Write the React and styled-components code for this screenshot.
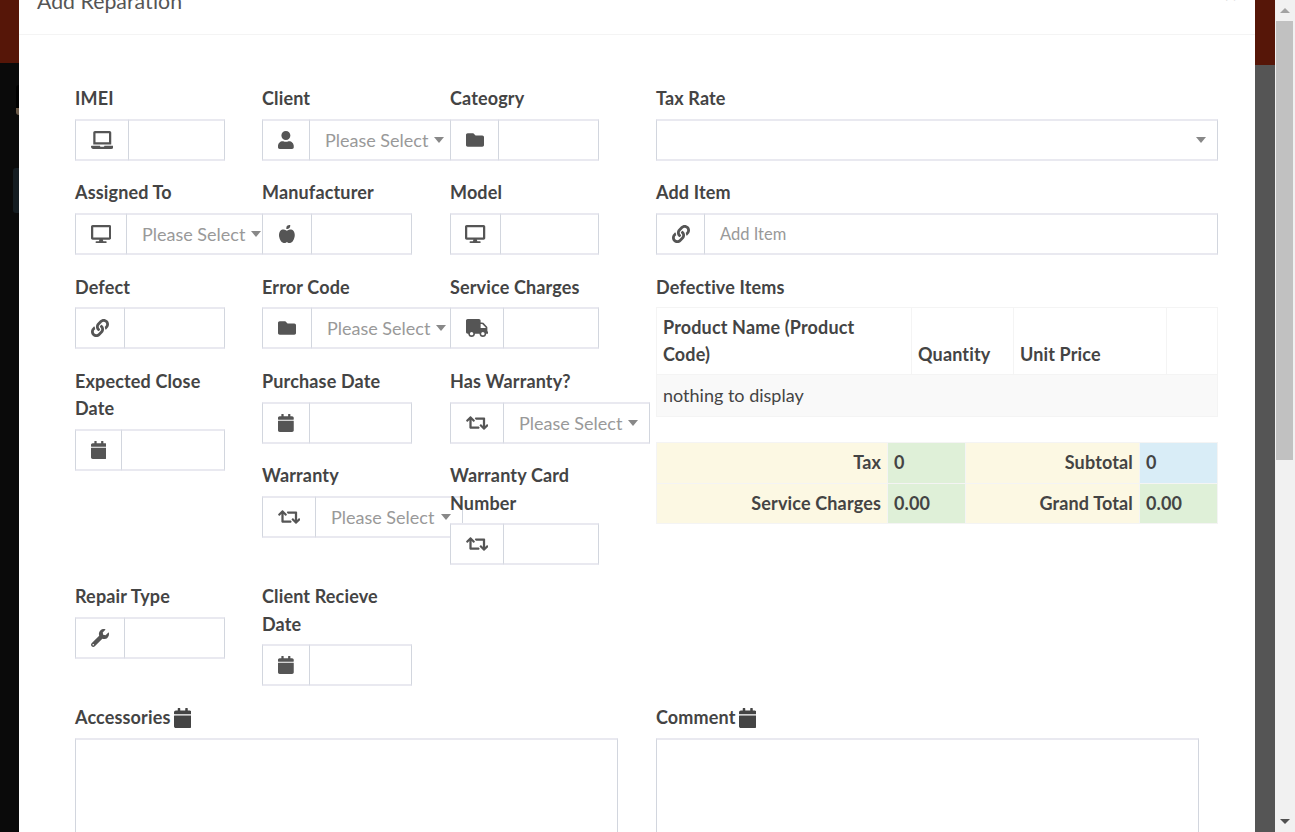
import React from "react";
import styled, { createGlobalStyle } from "styled-components";
import {
  FaLaptop, FaUser, FaFolder, FaDesktop, FaAppleAlt, FaLink, FaTruck,
  FaCalendar, FaRetweet, FaWrench,
} from "react-icons/fa";

const Global = createGlobalStyle`
  html, body { margin: 0; padding: 0; height: 100%; overflow: hidden; }
  body { font-family: "Lato", "Liberation Sans", sans-serif; color: #444; }
  * { box-sizing: border-box; }
`;

const Page = styled.div`
  display: flex;
  height: 832px;
  overflow: hidden;
`;

const Gutter = styled.div`
  flex: none;
  width: ${({ $w }) => $w}px;
  display: flex;
  flex-direction: column;
  background: ${({ $bg }) => $bg};
`;

const Band = styled.div`
  flex: none;
  height: ${({ $h }) => $h}px;
  background: #561608;
`;

const Avatar = styled.div`
  width: 3px;
  height: 30px;
  margin: 22px 0 0 16px;
  border-radius: 3px 0 0 3px;
  background: linear-gradient(#000 77%, #6b5a48 77%);
`;

const SideItem = styled.div`
  width: 6px;
  height: 45px;
  margin: 53px 0 0 13px;
  border-radius: 3px 0 0 3px;
  background: #151d22;
`;

const Modal = styled.div`
  flex: none;
  width: 1236px;
  background: #fff;
  overflow: hidden;
`;

const Header = styled.div`
  height: 35px;
  padding: 0 18px;
  display: flex;
  align-items: flex-end;
  justify-content: space-between;
  border-bottom: 1px solid #f4f4f4;
  overflow: hidden;
`;

const Title = styled.div`
  flex: none;
  font-size: 21.3px;
  line-height: 27px;
  margin-bottom: 19px;
  color: #555;
`;

const Close = styled.div`
  flex: none;
  font-size: 22px;
  line-height: 27px;
  margin: 0 0 26px 0;
  color: #c8c8c8;
`;

const Body = styled.div`
  padding: 49.8px 37px 0 56px;
`;

const Columns = styled.div`
  display: flex;
  height: 619.2px;
`;

const LeftGrid = styled.div`
  flex: none;
  width: 581px;
  display: grid;
  grid-template-columns: 187px 188px 206px;
  grid-template-rows: repeat(4, 94.4px) 121px 121px;
  align-items: start;
`;

const Field = styled.div`
  position: relative;
  min-width: 0;
  grid-column: ${({ $c }) => $c};
  grid-row: ${({ $r }) => $r} / span ${({ $span }) => $span || 1};
  z-index: ${({ $c }) => $c};
`;

const Label = styled.label`
  display: block;
  width: ${({ $w }) => $w || "100%"};
  font-size: 18px;
  line-height: 27.2px;
  letter-spacing: 0.15px;
  font-weight: 700;
  color: #444;
  margin-bottom: 6.6px;
`;

const Group = styled.div`
  display: flex;
  height: 42px;
  width: ${({ $w }) => $w || 150}px;
  background: #fff;
`;

const Addon = styled.div`
  flex: none;
  width: ${({ $w }) => $w}px;
  display: flex;
  align-items: center;
  justify-content: center;
  color: #555;
  background: #fff;
  border: 1px solid #d2d6de;
  border-top: 2px solid #e9e9f0;
  border-bottom: 2px solid #e9e9f0;
  svg {
    width: ${({ $iw }) => $iw || 18}px;
    height: 18px;
  }
`;

const Input = styled.div`
  flex: 1;
  display: flex;
  align-items: center;
  min-width: 0;
  font-size: ${({ $size }) => $size || 18}px;
  padding-left: 15px;
  color: #999;
  background: #fff;
  border: 1px solid #d2d6de;
  border-left: 0;
  border-top: 2px solid #e9e9f0;
  border-bottom: 2px solid #e9e9f0;
`;

const Select = styled(Input)`
  flex: none;
  width: ${({ $w }) => $w || 146}px;
  justify-content: space-between;
  padding-right: 11px;
  white-space: nowrap;
`;

const TaxSelect = styled(Select)`
  border-left: 1px solid #d2d6de;
`;

const Caret = styled.span`
  flex: none;
  width: 0;
  height: 0;
  border-left: 5px solid transparent;
  border-right: 5px solid transparent;
  border-top: 6px solid #888;
`;

const Right = styled.div`
  flex: none;
  width: 562px;
`;

const RightField = styled.div`
  margin-bottom: 18.6px;
`;

const WideGroup = styled(Group)`
  width: 100%;
`;

const Grid = styled.table`
  width: 561px;
  border-collapse: collapse;
  table-layout: fixed;
  margin-bottom: 25px;
  font-size: 18px;
  line-height: 27.2px;
  color: #444;
`;

const Th = styled.th`
  width: ${({ $w }) => $w}px;
  padding: 5.5px 6px 6px;
  text-align: left;
  vertical-align: bottom;
  font-weight: 700;
  letter-spacing: 0.15px;
  border: 1px solid #f4f4f4;
`;

const Td = styled.td`
  padding: 6.5px 6px 7px;
  background: #f9f9f9;
  border: 1px solid #f4f4f4;
`;

const TotalCell = styled.td`
  width: ${({ $w }) => $w}px;
  padding: 6px 6px 6.5px;
  font-weight: 700;
  letter-spacing: 0.15px;
  text-align: ${({ $right }) => ($right ? "right" : "left")};
  background: ${({ $bg }) => $bg};
  border: 1px solid #f4f4f4;
`;

const Notes = styled.div`
  display: grid;
  grid-template-columns: 581px 543px;
`;

const NoteLabel = styled(Label)`
  display: flex;
  align-items: center;
  gap: 3px;
  svg {
    width: 17.5px;
    height: 20px;
    color: #444;
  }
`;

const Note = styled.div`
  width: 543px;
  height: 150px;
  border: 1px solid #d2d6de;
  border-top: 2px solid #e9e9f0;
`;

const Scrollbar = styled.div`
  flex: none;
  width: 20px;
  height: 832px;
  display: flex;
  flex-direction: column;
  justify-content: space-between;
  background: #f1f1f1;
`;

const Thumb = styled.div`
  width: 17px;
  height: 439px;
  margin-left: 1px;
  background: #c1c1c1;
`;

const Arrow = styled.div`
  display: flex;
  align-items: center;
  justify-content: center;
  height: 21px;
  &::before {
    content: "";
    width: 0;
    height: 0;
    border-left: 5px solid transparent;
    border-right: 5px solid transparent;
    ${({ $up }) => ($up ? "border-bottom: 5px solid #a3a3a3;" : "border-top: 5px solid #505050;")}
  }
`;

// icon widths follow the glyph's own aspect ratio at 18px high
const WIDE = 22.5;
const SCREEN = 20.25;
const NARROW = 15.75;

const fields = [
  { c: 1, r: 1, label: "IMEI", Icon: FaLaptop, w: 54, iw: WIDE },
  { c: 2, r: 1, label: "Client", Icon: FaUser, w: 48, iw: NARROW, select: true },
  { c: 3, r: 1, label: "Cateogry", Icon: FaFolder, w: 49, gw: 149 },
  { c: 1, r: 2, label: "Assigned To", Icon: FaDesktop, w: 52, iw: SCREEN, select: true },
  { c: 2, r: 2, label: "Manufacturer", Icon: FaAppleAlt, w: 50, iw: NARROW },
  { c: 3, r: 2, label: "Model", Icon: FaDesktop, w: 51, iw: SCREEN, gw: 149 },
  { c: 1, r: 3, label: "Defect", Icon: FaLink, w: 50 },
  { c: 2, r: 3, label: "Error Code", Icon: FaFolder, w: 50, select: true },
  { c: 3, r: 3, label: "Service Charges", Icon: FaTruck, w: 54, iw: WIDE, gw: 149 },
  { c: 1, r: 4, span: 2, label: "Expected Close Date", Icon: FaCalendar, w: 47, iw: NARROW, lw: "140px" },
  { c: 2, r: 4, label: "Purchase Date", Icon: FaCalendar, w: 48, iw: NARROW },
  { c: 3, r: 4, label: "Has Warranty?", Icon: FaRetweet, w: 54, iw: WIDE, select: true },
  { c: 2, r: 5, label: "Warranty", Icon: FaRetweet, w: 54, iw: WIDE, select: true, sw: 147 },
  { c: 3, r: 5, label: "Warranty Card Number", Icon: FaRetweet, w: 54, iw: WIDE, gw: 149, lw: "150px" },
  { c: 1, r: 6, label: "Repair Type", Icon: FaWrench, w: 50 },
  { c: 2, r: 6, label: "Client Recieve Date", Icon: FaCalendar, w: 48, iw: NARROW, lw: "140px" },
];

function App() {
  return (
    <Page>
      <Global />
      <Gutter $w={19} $bg="#0a0a0a">
        <Band $h={63} />
        <Avatar />
        <SideItem />
      </Gutter>
      <Modal>
        <Header>
          <Title>Add Reparation</Title>
          <Close>×</Close>
        </Header>
        <Body>
          <Columns>
            <LeftGrid>
              {fields.map((f) => (
                <Field key={f.label} $c={f.c} $r={f.r} $span={f.span}>
                  <Label $w={f.lw}>{f.label}</Label>
                  <Group $w={f.select ? f.w + (f.sw || 146) : f.gw}>
                    <Addon $w={f.w} $iw={f.iw}><f.Icon /></Addon>
                    {f.select ? (
                      <Select $w={f.sw}>Please Select <Caret /></Select>
                    ) : (
                      <Input />
                    )}
                  </Group>
                </Field>
              ))}
            </LeftGrid>
            <Right>
              <RightField>
                <Label>Tax Rate</Label>
                <WideGroup>
                  <TaxSelect $w={562}>
                    <span />
                    <Caret />
                  </TaxSelect>
                </WideGroup>
              </RightField>
              <RightField>
                <Label>Add Item</Label>
                <WideGroup>
                  <Addon $w={49}><FaLink /></Addon>
                  <Input $size={16.5}>Add Item</Input>
                </WideGroup>
              </RightField>
              <Label>Defective Items</Label>
              <Grid>
                <thead>
                  <tr>
                    <Th $w={255}>Product Name (Product<br />Code)</Th>
                    <Th $w={102}>Quantity</Th>
                    <Th $w={153}>Unit Price</Th>
                    <Th $w={51} />
                  </tr>
                </thead>
                <tbody>
                  <tr>
                    <Td colSpan={4}>nothing to display</Td>
                  </tr>
                </tbody>
              </Grid>
              <Grid>
                <tbody>
                  <tr>
                    <TotalCell $w={231} $right $bg="#fcf8e3">Tax</TotalCell>
                    <TotalCell $w={78} $bg="#dff0d8">0</TotalCell>
                    <TotalCell $w={174} $right $bg="#fcf8e3">Subtotal</TotalCell>
                    <TotalCell $w={78} $bg="#d9edf7">0</TotalCell>
                  </tr>
                  <tr>
                    <TotalCell $right $bg="#fcf8e3">Service Charges</TotalCell>
                    <TotalCell $bg="#dff0d8">0.00</TotalCell>
                    <TotalCell $right $bg="#fcf8e3">Grand Total</TotalCell>
                    <TotalCell $bg="#dff0d8">0.00</TotalCell>
                  </tr>
                </tbody>
              </Grid>
            </Right>
          </Columns>
          <Notes>
            <div>
              <NoteLabel>Accessories <FaCalendar /></NoteLabel>
              <Note />
            </div>
            <div>
              <NoteLabel>Comment <FaCalendar /></NoteLabel>
              <Note />
            </div>
          </Notes>
        </Body>
      </Modal>
      <Gutter $w={20} $bg="#555">
        <Band $h={65} />
      </Gutter>
      <Scrollbar>
        <div>
          <Arrow $up />
          <Thumb />
        </div>
        <Arrow />
      </Scrollbar>
    </Page>
  );
}

export default App;
